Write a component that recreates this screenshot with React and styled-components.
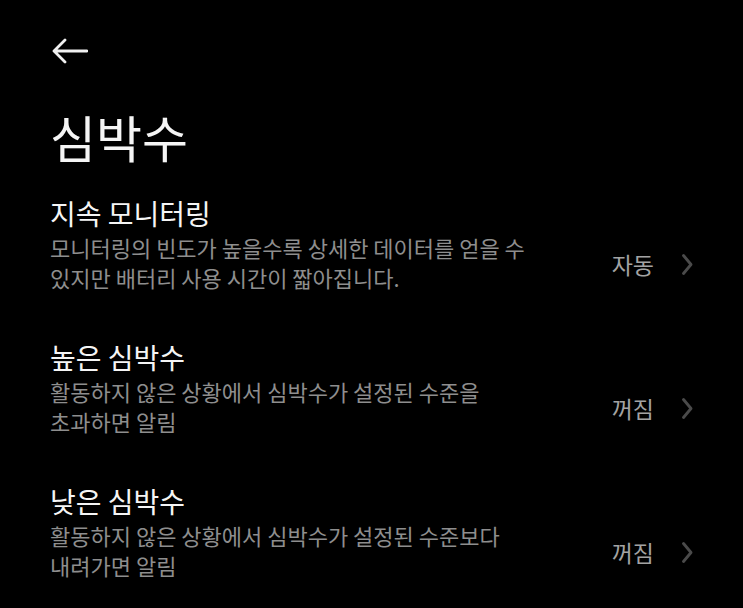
import React from 'react';
import styled, { createGlobalStyle } from 'styled-components';

const GlobalStyle = createGlobalStyle`
  html, body {
    margin: 0;
    padding: 0;
    background: #000;
  }
  body {
    font-family: "Noto Sans CJK KR", "Noto Sans", sans-serif;
    color: #f2f2f2;
  }
`;

const Page = styled.div`
  width: 743px;
  height: 608px;
  overflow: hidden;
  background: #000;
  padding: 38px 50px 0 50px;
  box-sizing: border-box;
`;

const BackButton = styled.button`
  display: block;
  background: none;
  border: 0;
  padding: 0;
  margin: 0 0 0 2px;
  width: 36px;
  height: 26px;
  cursor: pointer;
`;

const Title = styled.h1`
  margin: 40px 0 0 0;
  font-size: 50px;
  font-weight: 400;
  line-height: 64px;
  color: #f5f5f5;
`;

const List = styled.div`
  display: flex;
  flex-direction: column;
  gap: 46px;
  margin-top: 26px;
`;

const Item = styled.div`
  display: flex;
  flex-direction: column;
`;

const ItemTitle = styled.div`
  font-size: 28px;
  line-height: 38px;
  color: #f5f5f5;
`;

const DescRow = styled.div`
  display: flex;
  align-items: center;
  justify-content: space-between;
`;

const ItemDesc = styled.div`
  width: 500px;
  font-size: 22px;
  line-height: 30px;
  color: #8e8e8e;
  word-break: keep-all;
`;

const ValueBox = styled.div`
  display: flex;
  align-items: center;
  gap: 28px;
  margin-top: 4px;
`;

const Value = styled.span`
  font-size: 23px;
  line-height: 30px;
  color: #a3a3a3;
`;

function ArrowLeft() {
  return (
    <svg width="36" height="26" viewBox="0 0 36 26" fill="none">
      <path d="M35 13 H3 M13 2 L2 13 L13 24" stroke="#f0f0f0" strokeWidth="2.8" strokeLinecap="round" strokeLinejoin="round" />
    </svg>
  );
}

function Chevron() {
  return (
    <svg width="11" height="21" viewBox="0 0 11 21" fill="none">
      <path d="M1.5 1.5 L9 10.5 L1.5 19.5" stroke="#4a4a4a" strokeWidth="2.8" strokeLinecap="round" strokeLinejoin="round" />
    </svg>
  );
}

const items = [
  {
    title: '지속 모니터링',
    desc: '모니터링의 빈도가 높을수록 상세한 데이터를 얻을 수 있지만 배터리 사용 시간이 짧아집니다.',
    value: '자동',
  },
  {
    title: '높은 심박수',
    desc: '활동하지 않은 상황에서 심박수가 설정된 수준을 초과하면 알림',
    value: '꺼짐',
  },
  {
    title: '낮은 심박수',
    desc: '활동하지 않은 상황에서 심박수가 설정된 수준보다 내려가면 알림',
    value: '꺼짐',
  },
];

export default function App() {
  return (
    <>
      <GlobalStyle />
      <Page>
        <BackButton aria-label="뒤로">
          <ArrowLeft />
        </BackButton>
        <Title>심박수</Title>
        <List>
          {items.map((item) => (
            <Item key={item.title}>
              <ItemTitle>{item.title}</ItemTitle>
              <DescRow>
                <ItemDesc>{item.desc}</ItemDesc>
                <ValueBox>
                  <Value>{item.value}</Value>
                  <Chevron />
                </ValueBox>
              </DescRow>
            </Item>
          ))}
        </List>
      </Page>
    </>
  );
}
